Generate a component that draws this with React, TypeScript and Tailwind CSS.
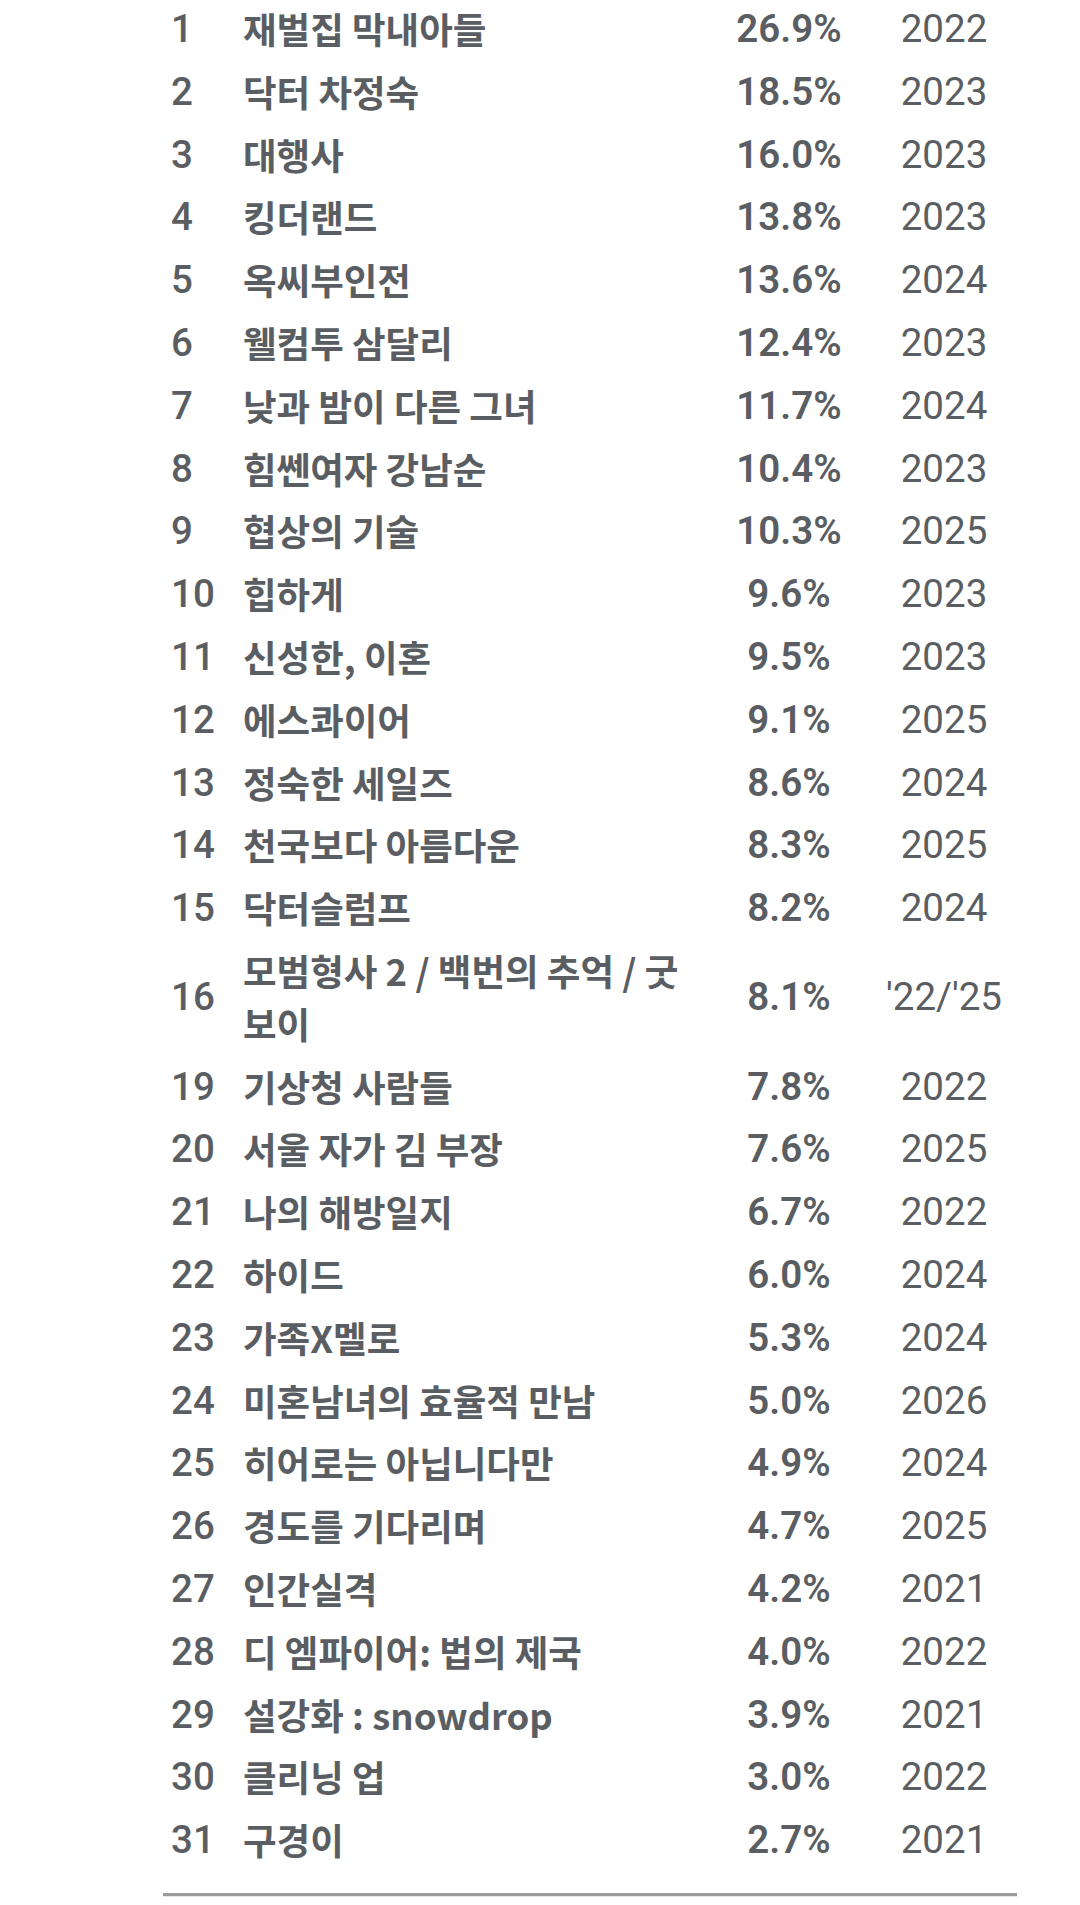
import React from 'react';

type Row = { rank: string; title: string; rating: string; year: string };

const rows: Row[] = [
  { rank: '1', title: '재벌집 막내아들', rating: '26.9%', year: '2022' },
  { rank: '2', title: '닥터 차정숙', rating: '18.5%', year: '2023' },
  { rank: '3', title: '대행사', rating: '16.0%', year: '2023' },
  { rank: '4', title: '킹더랜드', rating: '13.8%', year: '2023' },
  { rank: '5', title: '옥씨부인전', rating: '13.6%', year: '2024' },
  { rank: '6', title: '웰컴투 삼달리', rating: '12.4%', year: '2023' },
  { rank: '7', title: '낮과 밤이 다른 그녀', rating: '11.7%', year: '2024' },
  { rank: '8', title: '힘쎈여자 강남순', rating: '10.4%', year: '2023' },
  { rank: '9', title: '협상의 기술', rating: '10.3%', year: '2025' },
  { rank: '10', title: '힙하게', rating: '9.6%', year: '2023' },
  { rank: '11', title: '신성한, 이혼', rating: '9.5%', year: '2023' },
  { rank: '12', title: '에스콰이어', rating: '9.1%', year: '2025' },
  { rank: '13', title: '정숙한 세일즈', rating: '8.6%', year: '2024' },
  { rank: '14', title: '천국보다 아름다운', rating: '8.3%', year: '2025' },
  { rank: '15', title: '닥터슬럼프', rating: '8.2%', year: '2024' },
  { rank: '16', title: '모범형사 2 / 백번의 추억 / 굿 보이', rating: '8.1%', year: "'22/'25" },
  { rank: '19', title: '기상청 사람들', rating: '7.8%', year: '2022' },
  { rank: '20', title: '서울 자가 김 부장', rating: '7.6%', year: '2025' },
  { rank: '21', title: '나의 해방일지', rating: '6.7%', year: '2022' },
  { rank: '22', title: '하이드', rating: '6.0%', year: '2024' },
  { rank: '23', title: '가족X멜로', rating: '5.3%', year: '2024' },
  { rank: '24', title: '미혼남녀의 효율적 만남', rating: '5.0%', year: '2026' },
  { rank: '25', title: '히어로는 아닙니다만', rating: '4.9%', year: '2024' },
  { rank: '26', title: '경도를 기다리며', rating: '4.7%', year: '2025' },
  { rank: '27', title: '인간실격', rating: '4.2%', year: '2021' },
  { rank: '28', title: '디 엠파이어: 법의 제국', rating: '4.0%', year: '2022' },
  { rank: '29', title: '설강화 : snowdrop', rating: '3.9%', year: '2021' },
  { rank: '30', title: '클리닝 업', rating: '3.0%', year: '2022' },
  { rank: '31', title: '구경이', rating: '2.7%', year: '2021' },
];

export default function App() {
  return (
    <div className="bg-white w-[1080px] min-h-[1905px] text-[#5a5e62] overflow-hidden">
      <div className="ml-[163px] w-[854px] -mt-[2px]">
        {rows.map((r) => (
          <div key={r.rank} className="flex items-center py-[5px]">
            <div className="w-[80px] shrink-0 pl-[8px] font-['Roboto',sans-serif] text-[38.5px] leading-[52.8px] font-medium">
              {r.rank}
            </div>
            {/* keep-all so long titles wrap at spaces like the original */}
            <div className="w-[464px] shrink-0 pr-[8px] break-keep font-['Noto_Sans_CJK_KR',sans-serif] text-[36.5px] leading-[52.8px] font-bold">
              {r.title}
            </div>
            <div className="w-[164px] shrink-0 text-center font-['Roboto',sans-serif] text-[38.5px] leading-[52.8px] font-semibold">
              {r.rating}
            </div>
            <div className="w-[146px] shrink-0 text-center font-['Roboto',sans-serif] text-[38.5px] leading-[52.8px]">
              {r.year}
            </div>
          </div>
        ))}
        <div className="mt-[21px] border-t-[3px] border-[#9b9b9b]" />
        <div className="h-px bg-[#e8e8e8]" />
      </div>
    </div>
  );
}
